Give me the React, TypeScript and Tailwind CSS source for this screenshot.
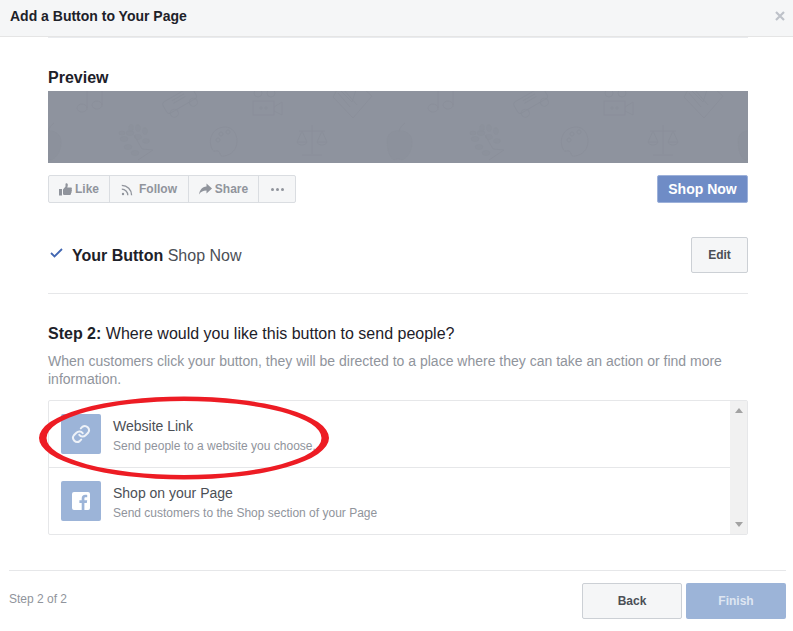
import React from "react";

function Pattern({ dx }: { dx: number }) {
  const s = { fill: "#8c919c", stroke: "#8b909b", strokeWidth: 0.6 } as const;
  const h = { fill: "none", stroke: "#8a8f9a", strokeWidth: 0.9 } as const;
  return (
    <g transform={`translate(${dx} 0)`}>
      {/* note */}
      <g {...h}>
        <ellipse cx="34" cy="17" rx="5" ry="4" />
        <ellipse cx="49" cy="14" rx="5" ry="4" />
        <path d="M39 17V0M54 14V-3" />
      </g>
      {/* car */}
      <g {...h} transform="rotate(-30 132 12)">
        <rect x="116" y="3" width="34" height="13" rx="3" />
        <circle cx="122" cy="18" r="4" />
        <circle cx="144" cy="18" r="4" />
        <path d="M126 9h14M126 6h14" />
      </g>
      {/* camera */}
      <g {...h}>
        <circle cx="210" cy="2" r="4" />
        <circle cx="223" cy="2" r="4" />
        <rect x="205" y="10" width="21" height="14" />
        <path d="M226 16l8-5v13l-8-4" />
        <circle cx="213" cy="17" r="1.2" />
        <circle cx="218" cy="17" r="1.2" />
      </g>
      {/* book */}
      <g {...h}>
        <path d="M285 6l20 21 19-22-14-12-6 18-14-14z" />
        <path d="M295 -2l14 16M290 2l12 14" />
      </g>
      {/* apple */}
      <g {...s}>
        <path d="M-12 50c0-8 7-11 12-10 5-1 12 2 13 9 1 9-4 18-10 20l-4-1-4 1c-4-2-7-10-7-19z" />
      </g>
      <path d="M0 40c1-3 3-6 6-8" {...h} />
      {/* tree */}
      <g {...s}>
        <ellipse cx="76" cy="48" rx="4" ry="2.4" />
        <ellipse cx="82" cy="42" rx="4" ry="2.4" />
        <ellipse cx="74" cy="42" rx="3" ry="2" />
        <ellipse cx="90" cy="37" rx="2.4" ry="3.6" />
        <ellipse cx="83" cy="37" rx="2.2" ry="3.4" />
        <ellipse cx="97" cy="40" rx="2.4" ry="3.6" />
        <ellipse cx="90" cy="46" rx="3.6" ry="2.4" />
        <ellipse cx="80" cy="56" rx="4" ry="2.4" />
        <ellipse cx="87" cy="62" rx="4" ry="2.4" />
        <ellipse cx="98" cy="50" rx="3.6" ry="2.2" />
      </g>
      <path d="M86 44l8 14 11 1-15 10" {...h} />
      {/* palette */}
      <g {...h}>
        <path d="M164 58c-5-11 2-22 13-22 8 0 12 7 12 14 0 9-6 14-13 15-5 1-3-4-6-5-2-1-4 2-6-2z" />
        <circle cx="170" cy="49" r="2" />
        <circle cx="173" cy="43" r="2" />
        <circle cx="180" cy="41" r="2" />
      </g>
      {/* scales */}
      <g {...h}>
        <path d="M251 40h26M264 34v29M254 64h20" />
        <path d="M254 40l-5 11h10zM274 40l-5 11h10z" />
        <path d="M249 51c1 4 9 4 10 0M269 51c1 4 9 4 10 0" />
      </g>
    </g>
  );
}

function Banner() {
  return (
    <div className="h-[72px] bg-[#8e939e] overflow-hidden">
      <svg width="700" height="72" viewBox="0 0 700 72" className="block">
        <Pattern dx={0} />
        <Pattern dx={351} />
        <Pattern dx={702} />
      </svg>
    </div>
  );
}

function Row({
  icon,
  title,
  sub,
  border,
}: {
  icon: React.ReactNode;
  title: string;
  sub: string;
  border?: boolean;
}) {
  return (
    <div className={`h-[67px] flex items-start pl-[12px] pt-[13px] ${border ? "border-b border-[#e6e7e9]" : ""}`}>
      <div className="w-[40px] h-[40px] rounded-[2px] bg-[#9cb4d8] flex items-center justify-center shrink-0">{icon}</div>
      <div className="ml-[12px]">
        <div className="text-[14px] leading-[18px] text-[#4b4f56] mt-[3px]">{title}</div>
        <div className="text-[12px] leading-[16px] text-[#90949c] mt-[3px]">{sub}</div>
      </div>
    </div>
  );
}

const barBtn = "h-full flex items-center justify-center text-[12px] font-bold text-[#90949c] border-r border-[#dadde1]";

export default function App() {
  return (
    <div className="relative w-[793px] h-[631px] overflow-hidden bg-white font-['Liberation_Sans',Arial,sans-serif]">
      <header className="h-[37px] bg-[#f5f6f7] border-b border-[#e5e5e5] flex items-center justify-between pl-[10px] pr-[8px]">
        <h1 className="text-[14px] font-bold text-[#1d2129] relative top-[-2px]">Add a Button to Your Page</h1>
        <svg width="10" height="10" viewBox="0 0 10 10" className="relative top-[-2px]">
          <path d="M1 1l8 8M9 1l-8 8" stroke="#bec2c9" strokeWidth="2.2" />
        </svg>
      </header>

      <main className="mx-[48px] w-[700px] border-t border-[#e9ebee]">
        <h2 className="mt-[32px] text-[16px] leading-[16px] font-bold text-[#1d2129]">Preview</h2>
        <div className="mt-[5px]">
          <Banner />
        </div>

        <div className="mt-[12px] h-[28px] flex justify-between">
          <div className="flex h-full w-[248px] rounded-[2px] border border-[#dadde1] bg-[#f5f6f7]">
            <div className={`${barBtn} w-[61px]`}>
              <svg width="13" height="13" viewBox="0 0 13 13" className="mr-[3px]" fill="#90949c">
                <path d="M0 6h3v6.5H0zM4 6.5l2.5-3V1c0-1 2-1 2.3.6.2 1-.3 2.3-.5 3h3.4c1.3 0 1.5 1.3.9 2 .5.5.4 1.4-.1 1.8.3.6.1 1.4-.5 1.7.2.9-.3 1.9-1.3 1.9H6.5c-1 0-1.5-.4-2.5-.6z" />
              </svg>
              Like
            </div>
            <div className={`${barBtn} w-[79px]`}>
              <svg width="13" height="13" viewBox="0 0 13 13" className="mr-[5px]" fill="none" stroke="#90949c" strokeWidth="1.3">
                <circle cx="2" cy="11" r="1.2" fill="#90949c" stroke="none" />
                <path d="M0.8 6.2c3.4 0 6 2.6 6 6M0.8 2.4c5.5 0 9.8 4.3 9.8 9.8" />
              </svg>
              Follow
            </div>
            <div className={`${barBtn} w-[70px]`}>
              <svg width="13" height="12" viewBox="0 0 13 12" className="mr-[3px]" fill="#90949c">
                <path d="M7.5 0.5L13 5.5 7.5 10.5V7.5C4 7.5 2 8.5 0 11.5 0.5 7 3 3.7 7.5 3.4z" />
              </svg>
              Share
            </div>
            <div className="flex-1 flex items-center justify-center gap-[2px]">
              <span className="w-[3px] h-[3px] rounded-full bg-[#90949c]" />
              <span className="w-[3px] h-[3px] rounded-full bg-[#90949c]" />
              <span className="w-[3px] h-[3px] rounded-full bg-[#90949c]" />
            </div>
          </div>
          <div className="w-[91px] h-full rounded-[2px] bg-[#6f8cc6] border border-[#9db1da] flex items-center justify-center text-[14px] font-bold text-white">
            Shop Now
          </div>
        </div>

        <div className="mt-[34px] h-[36px] flex items-center justify-between">
          <div className="flex items-center">
            <svg width="13" height="10" viewBox="0 0 13 10" className="ml-[2px] relative top-[-2px]" fill="none" stroke="#4267b2" strokeWidth="1.8">
              <path d="M1 5l3.5 3.5L12 1" />
            </svg>
            <span className="ml-[9px] text-[16px] leading-[20px] text-[#4b4f56] relative top-[1px]">
              <b className="text-[#1d2129]">Your Button</b> Shop Now
            </span>
          </div>
          <div className="w-[57px] h-full rounded-[2px] border border-[#ccd0d5] bg-[#f5f6f7] flex items-center justify-center text-[12px] font-bold text-[#4b4f56]">
            Edit
          </div>
        </div>

        <div className="mt-[20px] border-t border-[#e6e7e9]" />

        <h3 className="mt-[30px] text-[16px] leading-[20px] text-[#1d2129]">
          <b>Step 2:</b> Where would you like this button to send people?
        </h3>
        <p className="mt-[8px] text-[14px] leading-[18px] text-[#90949c]">
          When customers click your button, they will be directed to a place where they can take an action or find more information.
        </p>

        <div className="mt-[12px] h-[135px] rounded-[2px] border border-[#e6e7e9] flex">
          <div className="flex-1">
            <Row
              border
              title="Website Link"
              sub="Send people to a website you choose."
              icon={
                <svg width="20" height="20" viewBox="0 0 24 24" fill="none" stroke="#eef2f8" strokeWidth="2.4" strokeLinecap="round">
                  <path d="M10 13a5 5 0 0 0 7.5.5l3-3a5 5 0 0 0-7-7l-1.7 1.7" />
                  <path d="M14 11a5 5 0 0 0-7.5-.5l-3 3a5 5 0 0 0 7 7l1.7-1.7" />
                </svg>
              }
            />
            <Row
              title="Shop on your Page"
              sub="Send customers to the Shop section of your Page"
              icon={
                <svg width="18" height="18" viewBox="0 0 18 18">
                  <path
                    fill="#fff"
                    d="M2 0h14a2 2 0 0 1 2 2v14a2 2 0 0 1-2 2h-3.6v-7h2.4l.4-2.7h-2.8V6.6c0-.8.3-1.3 1.4-1.3h1.4V2.9c-.3 0-1.1-.1-2-.1-2.1 0-3.5 1.3-3.5 3.6v1.9H7.4V11h2.3v7H2a2 2 0 0 1-2-2V2a2 2 0 0 1 2-2z"
                  />
                </svg>
              }
            />
          </div>
          <div className="w-[17px] bg-[#f1f1f1] flex flex-col items-center justify-between py-[7px]">
            <svg width="8" height="5" viewBox="0 0 8 5"><path d="M4 0l4 5H0z" fill="#a3a3a3" /></svg>
            <svg width="8" height="5" viewBox="0 0 8 5"><path d="M4 5L0 0h8z" fill="#a3a3a3" /></svg>
          </div>
        </div>
      </main>

      <footer className="mx-[9px] mt-[35px] w-[777px] border-t border-[#e6e7e9] flex justify-between pt-[12px]">
        <span className="text-[12px] leading-[16px] text-[#90949c] mt-[8px]">Step 2 of 2</span>
        <div className="flex gap-[4px]">
          <div className="w-[100px] h-[36px] rounded-[2px] border border-[#ccd0d5] bg-[#f5f6f7] flex items-center justify-center text-[12px] font-bold text-[#4b4f56]">
            Back
          </div>
          <div className="w-[100px] h-[36px] rounded-[2px] bg-[#9cb4d8] flex items-center justify-center text-[12px] font-bold text-[#dfe6f2]">
            Finish
          </div>
        </div>
      </footer>

      <svg width="300" height="92" viewBox="0 0 300 92" className="absolute left-[35px] top-[392px] pointer-events-none">
        <path
          fillRule="evenodd"
          fill="#ed1c24"
          d="M4 46a145 41.5 0 1 0 290 0a145 41.5 0 1 0-290 0zM11.5 46a137.5 37 0 1 1 275 0a137.5 37 0 1 1-275 0z"
        />
      </svg>
    </div>
  );
}
